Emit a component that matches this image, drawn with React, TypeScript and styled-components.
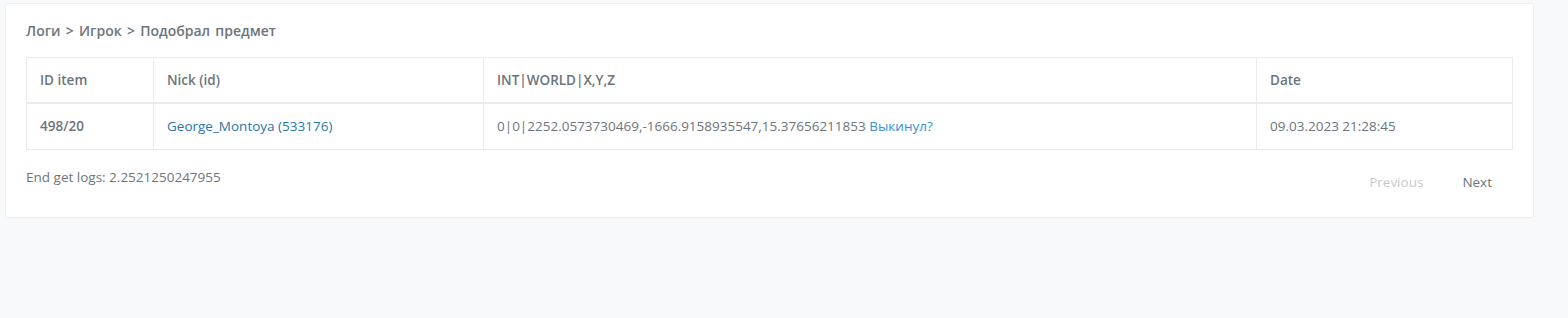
import styled, { createGlobalStyle } from 'styled-components';

const GlobalStyle = createGlobalStyle`
	body {
		margin: 0;
		background: #f8f9fa;
		font-family: "Open Sans", "Noto Sans", sans-serif;
		font-size: 13.5px;
		color: #6c757d;
	}
`;

const Page = styled.div`
	padding: 3px 34px 0 5px;
	height: 318px;
	box-sizing: border-box;
`;

const Card = styled.section`
	background: #fff;
	border: 1px solid #eceef1;
	border-radius: 3px;
	padding: 16px 20px 25px;
`;

const Breadcrumb = styled.div`
	font-size: 14px;
	font-weight: 600;
	line-height: 22px;
	word-spacing: 1.6px;
	color: #6c757d;
	margin-bottom: 15px;
`;

const Table = styled.table`
	width: 100%;
	border-collapse: collapse;
	th,
	td {
		border: 1px solid #e9ecef;
		padding: 12px 13px;
		line-height: 20px;
		text-align: left;
		white-space: nowrap;
	}
	td {
		line-height: 21px;
	}
	th {
		font-weight: 600;
		color: #6c757d;
		border-bottom-width: 2px;
	}
	td:first-child {
		font-weight: 600;
	}
`;

const Link = styled.a<{ $light?: boolean }>`
	color: ${(p) => (p.$light ? '#3a8fd2' : '#2b75a8')};
	text-decoration: none;
`;

const Footer = styled.div`
	display: flex;
	justify-content: space-between;
	align-items: flex-start;
	margin-top: 17px;
`;

const Timing = styled.div`
	line-height: 20px;
`;

const Pager = styled.div`
	display: flex;
	margin-top: 5px;
	margin-right: 8px;
`;

const PageButton = styled.button<{ $disabled?: boolean }>`
	border: none;
	background: none;
	font: inherit;
	line-height: 20px;
	padding: 0 13px;
	margin-left: 13px;
	color: ${(p) => (p.$disabled ? '#c7cacd' : '#6c757d')};
	cursor: ${(p) => (p.$disabled ? 'default' : 'pointer')};
`;

export default function App() {
	return (
		<Page>
			<GlobalStyle />
			<Card>
				<Breadcrumb>Логи &gt; Игрок &gt; Подобрал предмет</Breadcrumb>
				<Table>
					<thead>
						<tr>
							<th style={{ width: 100 }}>ID item</th>
							<th style={{ width: 303 }}>Nick (id)</th>
							<th>INT|WORLD|X,Y,Z</th>
							<th style={{ width: 229 }}>Date</th>
						</tr>
					</thead>
					<tbody>
						<tr>
							<td>498/20</td>
							<td>
								<Link href="#">George_Montoya (533176)</Link>
							</td>
							<td>
								0|0|2252.0573730469,-1666.9158935547,15.37656211853{' '}
								<Link $light href="#">
									Выкинул?
								</Link>
							</td>
							<td>09.03.2023 21:28:45</td>
						</tr>
					</tbody>
				</Table>
				<Footer>
					<Timing>End get logs: 2.2521250247955</Timing>
					<Pager>
						<PageButton $disabled>Previous</PageButton>
						<PageButton>Next</PageButton>
					</Pager>
				</Footer>
			</Card>
		</Page>
	);
}
